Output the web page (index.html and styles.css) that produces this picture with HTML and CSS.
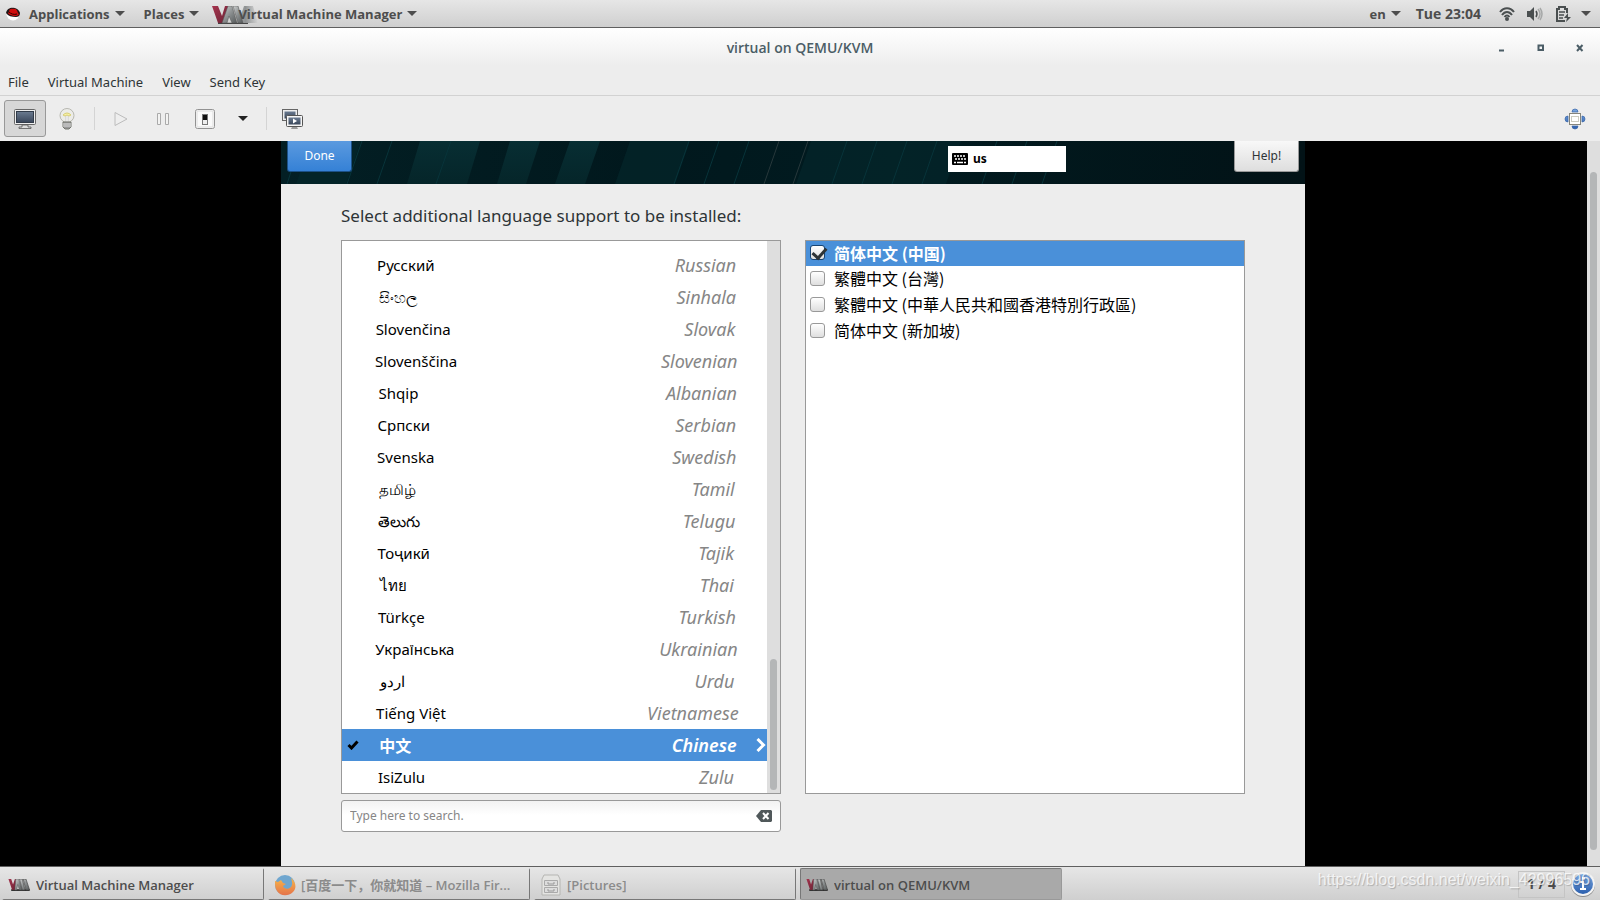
FILE: index.html
```html
<!DOCTYPE html>
<html lang="en">
<head>
<meta charset="utf-8">
<title>virtual on QEMU/KVM</title>
<link rel="stylesheet" href="styles.css">
</head>
<body>
<svg class="defs" aria-hidden="true">
  <defs>
    <linearGradient id="metal" x1="0" y1="0" x2="1" y2="1"><stop offset="0" stop-color="#d0d2d2"/><stop offset="0.5" stop-color="#8b8f90"/><stop offset="1" stop-color="#55595a"/></linearGradient>
    <linearGradient id="fade" x1="0" y1="0" x2="1" y2="0"><stop offset="0" stop-color="#b9bcbc"/><stop offset="0.5" stop-color="#8f9293"/><stop offset="1" stop-color="#8f9293" stop-opacity="0"/></linearGradient>
    <linearGradient id="wine" x1="0" y1="0" x2="1" y2="1"><stop offset="0" stop-color="#a5334d"/><stop offset="1" stop-color="#6b2436"/></linearGradient>
    <linearGradient id="screen" x1="0" y1="0" x2="0" y2="1"><stop offset="0" stop-color="#6b7b90"/><stop offset="1" stop-color="#39465a"/></linearGradient>
    <linearGradient id="blue" x1="0" y1="0" x2="0" y2="1"><stop offset="0" stop-color="#7aa7e0"/><stop offset="1" stop-color="#2b5fae"/></linearGradient>
    <linearGradient id="fox" x1="0" y1="0" x2="0" y2="1"><stop offset="0" stop-color="#f6b64a"/><stop offset="1" stop-color="#e5734a"/></linearGradient>
    <symbol id="vmm" viewBox="0 0 24 13">
      <path d="M3 12h20" fill="none" stroke="#333" stroke-width="2"/>
      <path d="M0 0h3l2 6 2-6h2L7 12H4z" fill="url(#wine)"/>
      <path d="M8 0h3l4 12h-3l-2-6-1 6H7z" fill="url(#metal)" stroke="#555" stroke-width=".5"/>
      <path d="M12 0h3l3 12h-3zM16 0h3l4 12h-4z" fill="url(#metal)" stroke="#444" stroke-width=".7"/>
    </symbol>
    <symbol id="vmm-large" viewBox="0 0 46 18">
      <path d="M6 17.500h30" fill="none" stroke="#444" stroke-width="1.500"/>
      <path d="M0 0h6l4 10 3-10h4l-6 17H6z" fill="url(#wine)"/>
      <path d="M16 0h4l5 17h-5l-3-7-2 7h-5z" fill="url(#metal)" stroke="#555" stroke-width=".5"/>
      <path d="M21 0h5l3 9 3-9h9l5 17H26z" fill="url(#fade)"/>
      <path d="M21 0h5l5 17h-5z" fill="url(#metal)" stroke="#555" stroke-width=".5"/>
    </symbol>
    <symbol id="down" viewBox="0 0 10 6"><path d="M0 0h10L5 5z" fill="currentColor"/></symbol>
  </defs>
</svg>

<header class="panel">
  <nav class="panel-left">
    <button class="panel-btn">
      <svg class="hat" viewBox="0 0 14 14"><circle cx="7" cy="7" r="6.500" fill="#fff"/><path d="M0 6C1-1 12-1 14 6c0 3-2 4-4 4C6 10 2 9 0 6z" fill="#201818"/><path d="M3 5c0-3 2-4 4-3 3-1 4 1 5 4 2 2 0 3-3 3C6 9 2 7 2 6z" fill="#d00d0d"/><path d="M3 5c2 2 5 3 8 2" fill="none" stroke="#300"/></svg>
      <span>Applications</span><svg class="caret"><use href="#down"/></svg>
    </button>
    <button class="panel-btn"><span>Places</span><svg class="caret"><use href="#down"/></svg></button>
    <button class="panel-btn app"><svg class="app-logo"><use href="#vmm-large"/></svg><span class="app-name">Virtual Machine Manager</span><svg class="caret"><use href="#down"/></svg></button>
  </nav>
  <div class="panel-right">
    <button class="panel-btn lang"><span>en</span><svg class="caret"><use href="#down"/></svg></button>
    <span class="clock">Tue 23:04</span>
    <svg class="ind" viewBox="0 0 16 16"><g fill="none" stroke="#4a4f50" stroke-width="2"><path d="M1 6c4-5 10-5 14 0M3 9c3-4 7-4 10 0" /><path d="M5.500 11c1.500-2 3.500-2 5 0"/></g><circle cx="8" cy="13" r="2" fill="#4a4f50"/></svg>
    <svg class="ind" viewBox="0 0 16 16"><path d="M0 5h3l4-4v14l-4-4H0z" fill="#4a4f50"/><g fill="none" stroke-width="1.500"><path d="M9 5q2 3 0 6" stroke="#4a4f50"/><path d="M11 3q4 5 0 10M13 2q4 6 0 12" stroke="#a6a8a8"/></g></svg>
    <svg class="ind" viewBox="0 0 16 16"><path d="M10 15H2V3h2V1h6v2h2v4" fill="none" stroke="#4a4f50" stroke-width="2"/><path d="M4 6h6M4 9h5M4 12h4" stroke="#4a4f50" stroke-width="1.500"/><path d="M13 7l-4 5h3l-1 4 5-5h-3z" fill="#4a4f50"/></svg>
    <svg class="caret"><use href="#down"/></svg>
  </div>
</header>

<section class="window">
  <div class="titlebar">
    <h1>virtual on QEMU/KVM</h1>
    <div class="wm">
      <button aria-label="Minimize"><svg viewBox="0 0 8 8"><path d="M1 6.500h5" stroke="#4b5d66" stroke-width="2"/></svg></button>
      <button aria-label="Maximize"><svg viewBox="0 0 8 8"><path d="M1.500 1.500h4.500v4.500H1.500z" fill="none" stroke="#4b5d66" stroke-width="2"/></svg></button>
      <button aria-label="Close"><svg viewBox="0 0 8 8"><path d="M1 1l5.500 6M6.500 1L1 7" stroke="#4b5d66" stroke-width="2"/></svg></button>
    </div>
  </div>
  <nav class="menubar"><button>File</button><button>Virtual Machine</button><button>View</button><button>Send Key</button></nav>
  <div class="toolbar">
    <button class="tool pressed" aria-label="Console"><svg viewBox="0 0 22 20"><rect x=".5" y=".5" width="21" height="15" rx="1" fill="#eee" stroke="#666"/><rect x="2.500" y="2.500" width="17" height="11" fill="url(#screen)" stroke="#313b49"/><path d="M8 16h6v2h3v1.500H5V18h3z" fill="#ddd" stroke="#555" stroke-width=".8"/></svg></button>
    <button class="tool" aria-label="Details"><svg viewBox="0 0 22 22"><circle cx="11" cy="7.500" r="7" fill="#ecece8" stroke="#b7b7b0"/><path d="M7 7q4-4 8 0l-2 1-2-1-2 1z" fill="#f8f3a8" stroke="#d8ce75"/><path d="M10 8v6h2V8" fill="#fff" stroke="#bbb" stroke-width=".7"/><path d="M7 14h8v5l-2 2H9l-2-2z" fill="#999" stroke="#74776f"/><path d="M7 16h8M7 18h8" stroke="#ddd"/></svg></button>
    <span class="sep"></span>
    <button class="tool" aria-label="Run"><svg viewBox="0 0 22 22"><path d="M5 4.500v13L17 11z" fill="#eee" stroke="#bcbcbc"/></svg></button>
    <button class="tool" aria-label="Pause"><svg viewBox="0 0 22 22"><path d="M5.500 5.500h3v11h-3zM13.500 5.500h3v11h-3z" fill="#f3f3f2" stroke="#aaa"/></svg></button>
    <button class="tool" aria-label="Shut down"><svg viewBox="0 0 22 22"><rect x="1.500" y="1.500" width="19" height="19" rx="2" fill="#fafafa" stroke="#929292"/><rect x="3" y="3" width="16" height="16" fill="none" stroke="#ddd"/><rect x="8.500" y="6.500" width="5" height="10" fill="#eee" stroke="#777"/><path d="M9 7h4v5H9z" fill="#111"/></svg></button>
    <button class="tool narrow" aria-label="Shutdown options"><svg class="caret dark"><use href="#down"/></svg></button>
    <span class="sep"></span>
    <button class="tool" aria-label="Snapshots"><svg viewBox="0 0 22 22"><rect x=".5" y="1.500" width="15" height="11" fill="#eee" stroke="#666"/><rect x="2.500" y="3.500" width="11" height="7" fill="url(#screen)"/><rect x="4.500" y="7.500" width="16" height="11" rx="1" fill="#f5f5f5" stroke="#555"/><rect x="6.500" y="9.500" width="12" height="7" fill="url(#screen)"/><path d="M11 10.500v5l4-2.500z" fill="#fff"/><path d="M10 19h5l1 2H9z" fill="#999"/></svg></button>
    <button class="tool full" aria-label="Fullscreen"><svg viewBox="0 0 22 22"><g fill="url(#blue)" stroke="#3a66a8" stroke-width=".7"><path d="M8 4q0-3 3-3t3 3zM8 18q0 3 3 3t3-3zM4 8q-3 0-3 3t3 3zM18 8q3 0 3 3t-3 3z"/></g><rect x="5.500" y="5.500" width="11" height="11" fill="#fff" stroke="#85857c"/><rect x="7.500" y="8.500" width="7" height="5" fill="#fff" stroke="#ccccc0"/></svg></button>
  </div>
</section>

<main class="viewport">
  <div class="stage">
    <section class="guest">
      <div class="banner">
        <svg class="stripes" viewBox="0 0 1024 43" preserveAspectRatio="xMinYMin slice" aria-hidden="true">
          <defs><linearGradient id="bn"><stop offset="0" stop-color="#031f24"/><stop offset=".35" stop-color="#01181d"/><stop offset=".6" stop-color="#011b20"/><stop offset="1" stop-color="#021216"/></linearGradient>
          <linearGradient id="st" x1="0" y1="0" x2="0" y2="1"><stop offset="0" stop-color="#072e33"/><stop offset="1" stop-color="#052529"/></linearGradient></defs>
          <rect width="1024" height="43" fill="url(#bn)"/>
          <path d="M139 0h60l-13 43h-60zM229 0h30l-14 43h-29zM289 0h30l-15 43h-30z" fill="url(#st)"/>
          <path d="M349 0h60l-15 43h-60zM530 0h60l-15 43h-60zM590 0h90l-15 43h-90zM30 0h50l-15 43H15z" fill="#04262b" opacity=".7"/>
          <path d="M20 0L6 43M81 0L66 43M111 0L96 43M170 0l-15 43M408 0l-15 43M438 0l-15 43M468 0l-15 43M566 0l-15 43M596 0l-15 43M626 0l-15 43M656 0l-15 43M716 0l-15 43M746 0l-15 43M776 0l-15 43" stroke="#08343a" fill="none"/>
          <path d="M498 0l-15 43M527 0l-15 43" stroke="#27383b" fill="none"/>
        </svg>
        <button class="gtk-btn done">Done</button>
        <div class="kbd"><svg viewBox="0 0 16 12"><rect width="16" height="12" rx="1"/><path d="M2 3h12M3 6h11" stroke="#fff" stroke-width="1.500" stroke-dasharray="2 1"/><path d="M2 9.500h2M5 9.500h6M12 9.500h2" stroke="#fff" stroke-width="1.500"/></svg><span>us</span></div>
        <button class="gtk-btn help">Help!</button>
      </div>
      <div class="content">
        <h2>Select additional language support to be installed:</h2>
        <div class="columns">
          <div class="left">
            <div class="frame langs">
              <ul>
                <li><span class="native">Русский</span><i>Russian</i></li>
                <li><span class="native">සිංහල</span><i>Sinhala</i></li>
                <li><span class="native">Slovenčina</span><i>Slovak</i></li>
                <li><span class="native">Slovenščina</span><i>Slovenian</i></li>
                <li><span class="native">Shqip</span><i>Albanian</i></li>
                <li><span class="native">Српски</span><i>Serbian</i></li>
                <li><span class="native">Svenska</span><i>Swedish</i></li>
                <li><span class="native">தமிழ்</span><i>Tamil</i></li>
                <li><span class="native">తెలుగు</span><i>Telugu</i></li>
                <li><span class="native">Тоҷикӣ</span><i>Tajik</i></li>
                <li><span class="native">ไทย</span><i>Thai</i></li>
                <li><span class="native">Türkçe</span><i>Turkish</i></li>
                <li><span class="native">Українська</span><i>Ukrainian</i></li>
                <li><span class="native" dir="rtl">اردو</span><i>Urdu</i></li>
                <li><span class="native">Tiếng Việt</span><i>Vietnamese</i></li>
                <li class="selected"><svg class="tick" viewBox="0 0 12 10"><path d="M1.500 5l3 3L10.500 1.500" fill="none" stroke="#000" stroke-width="3"/></svg><span class="native">中文</span><i>Chinese</i><svg class="chev" viewBox="0 0 10 14"><path d="M1.500 1l6 6-6 6" fill="none" stroke="#fff" stroke-width="3"/></svg></li>
                <li><span class="native">IsiZulu</span><i>Zulu</i></li>
              </ul>
              <div class="track"><div class="thumb"></div></div>
            </div>
            <div class="search"><input type="text" placeholder="Type here to search." aria-label="Search languages"><button aria-label="Clear"><svg viewBox="0 0 16 12"><path d="M0 6l5-6h10l1 1v10l-1 1H5z" fill="#50585a"/><path d="M7 3l5.500 6M12.500 3L7 9" stroke="#fff" stroke-width="2"/></svg></button></div>
          </div>
          <div class="frame locales">
            <label class="on"><input type="checkbox" checked>简体中文 (中国)</label>
            <label><input type="checkbox">繁體中文 (台灣)</label>
            <label><input type="checkbox">繁體中文 (中華人民共和國香港特別行政區)</label>
            <label><input type="checkbox">简体中文 (新加坡)</label>
          </div>
        </div>
      </div>
    </section>
  </div>
  <div class="outer-track"><div class="thumb"></div></div>
</main>

<footer class="taskbar">
  <button class="task"><svg class="task-logo"><use href="#vmm"/></svg><span>Virtual Machine Manager</span></button>
  <button class="task dim"><svg class="task-icon" viewBox="0 0 22 22"><circle cx="11" cy="11" r="10" fill="#6fa6cf"/><path d="M1 7l3 1 3-2 2 3 3 1-3 2c1 3 5 4 8 1 2-3 1-6 0-9 5 4 6 10 2 14-5 5-13 4-16-1-2-3-2-6-2-10z" fill="url(#fox)"/></svg><span>[百度一下，你就知道 – Mozilla Fir...</span></button>
  <button class="task dim"><svg class="task-icon" viewBox="0 0 22 22"><path d="M4 1h14l2 4v16H2V5z" fill="#e4e4e2" stroke="#b5b5b2"/><path d="M4.500 6.500h13v5h-13zM4.500 13.500h13v5h-13z" fill="#ddd" stroke="#aaa"/><path d="M8 8v2h6V8M8 15v2h6v-2" fill="none" stroke="#999"/></svg><span>[Pictures]</span></button>
  <button class="task active"><svg class="task-logo"><use href="#vmm"/></svg><span>virtual on QEMU/KVM</span></button>
  <div class="tray">
    <span class="pages">1 / 4</span>
    <svg class="info" viewBox="0 0 26 26"><circle cx="13" cy="14" r="12" fill="#8b8b8b"/><circle cx="13" cy="13" r="12" fill="#f3f3f3"/><circle cx="13" cy="13" r="10" fill="url(#blue)"/><path d="M10 10h4v7h2v2h-6v-2h2v-5h-2zM12 6h3v2.500h-3z" fill="#fff"/></svg>
    <span class="watermark">https://blog.csdn.net/weixin_42996596</span>
  </div>
</footer>
</body>
</html>
```
FILE: styles.css
```css
* { box-sizing: border-box; }
body { margin: 0; height: 100vh; display: flex; flex-direction: column; overflow: hidden; background: #ededed; color: #2e3436; font: 13px/18px "Noto Sans", "Noto Sans CJK SC", sans-serif; }
button { font: inherit; color: inherit; background: none; border: 0; padding: 0; }
h1, h2, ul { margin: 0; padding: 0; }
svg { display: block; flex: none; }
.defs { position: absolute; width: 0; height: 0; }
.caret { width: 10px; height: 6px; }

.panel { flex: none; height: 28px; padding: 0 9px 0 6px; display: flex; justify-content: space-between; align-items: center; background: linear-gradient(#e6e6e6, #cfcfcf); border-bottom: 1px solid #5f5f5f; color: #4d4d4d; font-family: "Open Sans", sans-serif; font-weight: 700; }
.panel-left, .panel-right, .panel-btn { display: flex; align-items: center; }
.panel-left { gap: 19px; }
.panel-btn { gap: 5px; }
.hat { width: 14px; height: 14px; margin-right: 4px; }
.app { position: relative; padding-left: 20px; }
.app-logo { position: absolute; left: -6px; top: 1px; width: 46px; height: 18px; }
.app-name { position: relative; }
.clock { margin: 0 18px 0 15px; font-size: 14px; }
.panel-right .ind { width: 16px; height: 16px; margin-right: 12px; }
.panel-right > .caret { margin-left: -2px; }

.window { flex: none; background: linear-gradient(#fff, #ededed 38px); }
.titlebar { display: flex; height: 40px; align-items: center; position: relative; justify-content: center; }
.titlebar h1 { font: 600 14px/18px "Open Sans", sans-serif; color: #4b5d66; }
.wm { position: absolute; right: 16px; display: flex; gap: 31px; }
.wm svg { width: 8px; height: 8px; }
.menubar { height: 28px; padding: 0 8px; display: flex; align-items: center; gap: 19px; border-bottom: 1px solid #d2d2d2; }
.toolbar { height: 45px; padding: 0 4px; display: flex; align-items: center; }
.tool { width: 42px; height: 37px; display: grid; place-items: center; border: 1px solid transparent; border-radius: 3px; }
.tool svg:not(.caret) { width: 22px; height: 22px; }
.tool.pressed { background: #d7d7d7; border-color: #999; }
.tool.narrow { width: 34px; }
.dark { color: #222; }
.sep { width: 1px; height: 23px; margin: 0 5px 0 6px; background: #d4d4d4; }
.full { margin-left: auto; }

.viewport { flex: 1; min-height: 0; display: flex; background: #000; }
.stage { flex: 1; display: flex; justify-content: center; padding-right: 1px; }
.guest { width: 100%; max-width: 1024px; display: flex; flex-direction: column; background: #ededed; }
.banner { position: relative; height: 43px; padding: 0 6px; display: flex; align-items: flex-start; overflow: hidden; }
.stripes { position: absolute; left: 0; top: 0; width: 100%; height: 100%; }
.gtk-btn { position: relative; width: 65px; height: 31px; border: 1px solid #999; border-top: 0; border-radius: 0 0 3px 3px; font-size: 12px; background: linear-gradient(#f8f8f8, #dedede); }
.done { color: #fff; background: linear-gradient(#5b9adf, #3581d6); border-color: #1c5187; }
.kbd { position: relative; width: 118px; height: 26px; margin: 5px 168px 0 auto; padding: 0 4px; display: flex; align-items: center; gap: 5px; background: #fff; color: #000; font: bold 12px/18px "Noto Sans", sans-serif; }
.kbd svg { width: 16px; height: 12px; }
.content { flex: 1; min-height: 0; padding: 20px 60px 34px; display: flex; flex-direction: column; }
.content h2 { font: 17px/24px "Noto Sans", sans-serif; margin-bottom: 12px; }
.columns { flex: 1; min-height: 0; display: grid; grid-template-columns: 1fr 1fr; gap: 24px; }
.left { display: flex; flex-direction: column; gap: 6px; min-height: 0; }
.frame { background: #fff; border: 1px solid #999; }
.langs { flex: 1; min-height: 0; display: flex; overflow: hidden; }
.langs ul { flex: 1; list-style: none; display: flex; flex-direction: column; justify-content: flex-end; }
.langs li { position: relative; flex: none; height: 32px; padding: 0 20px 0 24px; display: grid; grid-template-columns: 1fr 1fr; align-items: center; color: #000; font-size: 15px; line-height: 24px; }
.native, .langs i { display: flex; white-space: nowrap; }
.native::before, .langs i::after { content: ""; flex-grow: 1; }
.native::after, .langs i::before { content: ""; flex-grow: 11; }
.native[dir="rtl"] { flex-direction: row-reverse; }
.langs i { font-size: 18px; color: #868686; }
.langs .selected, .langs .selected i { color: #fff; font-weight: 600; }
.langs .selected { background: #4a90d9; }
.selected .native { font: bold 16px/24px "Noto Sans CJK SC", sans-serif; }
.tick { position: absolute; left: 5px; top: 11px; width: 12px; height: 10px; }
.chev { position: absolute; right: 1px; top: 9px; width: 10px; height: 14px; }
.track { width: 13px; padding: 3px; display: flex; align-items: flex-end; background: #dedede; }
.thumb { width: 7px; border-radius: 4px; background: #b4b6b7; }
.track .thumb { height: 24%; }
.search { flex: none; height: 32px; display: flex; align-items: center; padding: 0 8px; border: 1px solid #999; border-radius: 3px; background: linear-gradient(#f2f2f2, #fff 14px); }
.search input { flex: 1; min-width: 0; border: 0; padding: 0; background: none; outline: 0; font: 12px/18px "Noto Sans", sans-serif; }
.search input::placeholder { color: #868686; opacity: 1; }
.search svg { width: 16px; height: 12px; }
.locales { margin-bottom: 38px; }
.locales label { height: 26px; padding: 0 4px 2px; display: flex; align-items: center; gap: 9px; color: #000; font: 16px/24px "Noto Sans CJK SC", sans-serif; }
.locales .on { height: 25px; background: #4a90d9; color: #fff; font-weight: bold; }
.locales input { appearance: none; flex: none; width: 15px; height: 15px; margin: 0; border: 1px solid #999; border-radius: 3px; background: linear-gradient(#fff, #dedede); position: relative; }
.locales input:checked { border-color: #184472; }
.locales input:checked::after { content: ""; position: absolute; left: 4px; top: -1px; width: 6px; height: 11px; border: solid #2e3436; border-width: 0 3px 3px 0; transform: rotate(42deg); }
.outer-track { width: 13px; padding: 31px 3px 16px; background: #dedede; display: flex; }

.taskbar { flex: none; height: 34px; padding: 1px 4px 0 2px; display: flex; gap: 4px; align-items: stretch; border-top: 1px solid #5f5f5f; background: linear-gradient(#e6e6e6, #cfcfcf); color: #4d4d4d; font: 600 13px/18px "Open Sans", "Noto Sans CJK SC", sans-serif; }
.task { flex: 0 1 262px; min-width: 0; padding: 1px 5px 0; display: flex; align-items: center; gap: 5px; border: 1px solid transparent; border-right: 1px solid #777; border-bottom: 1px solid #777; border-radius: 2px; }
.task span { overflow: hidden; text-overflow: ellipsis; white-space: nowrap; }
.task.dim { color: #8b8b8b; }
.task.active { background: #a9a9a9; border-color: #777 #999 #999 #777; }
.task-logo { width: 23px; height: 12px; }
.task-icon { width: 22px; height: 22px; }
.tray { position: relative; margin-left: auto; display: flex; align-items: center; gap: 5px; }
.pages { width: 47px; height: 27px; display: grid; place-items: center; border: 1px solid #c4c4c4; font-size: 14px; font-weight: 700; }
.info { width: 26px; height: 26px; }
.watermark { position: absolute; right: 6px; top: 2px; color: rgba(255, 255, 255, .75); text-shadow: 1px 1px 1px rgba(0, 0, 0, .2); font: 16px/20px "Liberation Sans", sans-serif; white-space: nowrap; }
```
